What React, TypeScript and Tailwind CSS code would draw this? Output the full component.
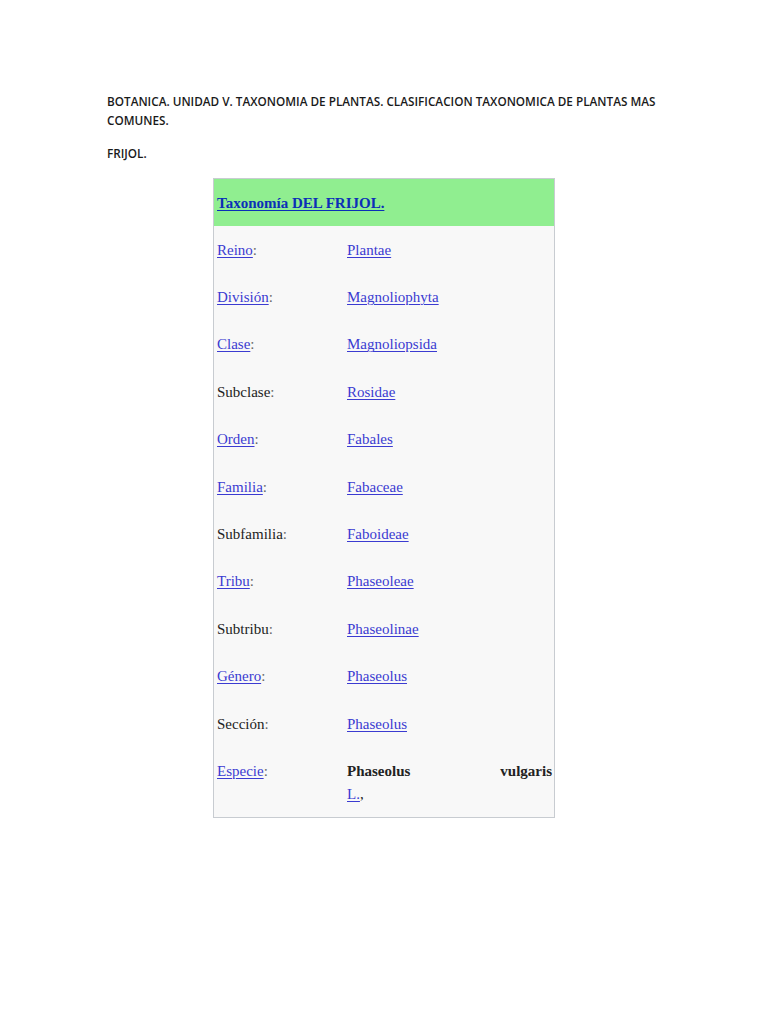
const rows: { k: string; kLink: boolean; v: string }[] = [
  { k: "Reino", kLink: true, v: "Plantae" },
  { k: "División", kLink: true, v: "Magnoliophyta" },
  { k: "Clase", kLink: true, v: "Magnoliopsida" },
  { k: "Subclase", kLink: false, v: "Rosidae" },
  { k: "Orden", kLink: true, v: "Fabales" },
  { k: "Familia", kLink: true, v: "Fabaceae" },
  { k: "Subfamilia", kLink: false, v: "Faboideae" },
  { k: "Tribu", kLink: true, v: "Phaseoleae" },
  { k: "Subtribu", kLink: false, v: "Phaseolinae" },
  { k: "Género", kLink: true, v: "Phaseolus" },
  { k: "Sección", kLink: false, v: "Phaseolus" },
];

const link = "text-[#3b3bd1] underline underline-offset-2 decoration-1";

export default function App() {
  return (
    <div className="min-h-[1024px] w-[768px] bg-white">
      <div className="px-[107px] pt-[92px] font-['Open_Sans',sans-serif] text-[11.75px] font-semibold leading-[19px] text-[#1a1a1a]">
        <p className="whitespace-nowrap">
          BOTANICA. UNIDAD V. TAXONOMIA DE PLANTAS. CLASIFICACION TAXONOMICA DE PLANTAS MAS
          <br />
          COMUNES.
        </p>
        <p className="mt-[14px]">FRIJOL.</p>
      </div>

      <div className="ml-[213px] mt-[15px] w-[342px] border border-[#c8ccd1] bg-[#f8f8f8] font-['Liberation_Serif',serif] text-[15px] text-[#222]">
        <div className="flex h-[47px] items-center bg-[#90ee90] px-[3px] pt-[2px]">
          <span className="font-bold text-[#0b2fb8] underline underline-offset-2">Taxonomía DEL FRIJOL.</span>
        </div>
        {rows.map((r) => (
          <div key={r.k} className="flex h-[47.4px] items-center pt-[1px] leading-[23px]">
            <div className="w-[133px] pl-[3px]">
              {r.kLink ? <span className={link}>{r.k}</span> : <span>{r.k}</span>}
              <span className="text-[#666]">:</span>
            </div>
            <div className="flex-1">
              <span className={link}>{r.v}</span>
            </div>
          </div>
        ))}
        <div className="flex pb-[11px] pt-[13px] leading-[23px]">
          <div className="w-[133px] pl-[3px]">
            <span className={link}>Especie</span>
            <span className="text-[#666]">:</span>
          </div>
          <div className="flex-1 pr-[2px]">
            <div className="flex justify-between font-bold">
              <span>Phaseolus</span>
              <span>vulgaris</span>
            </div>
            <div>
              <span className={link}>L.</span>
              <span>,</span>
            </div>
          </div>
        </div>
      </div>
    </div>
  );
}
